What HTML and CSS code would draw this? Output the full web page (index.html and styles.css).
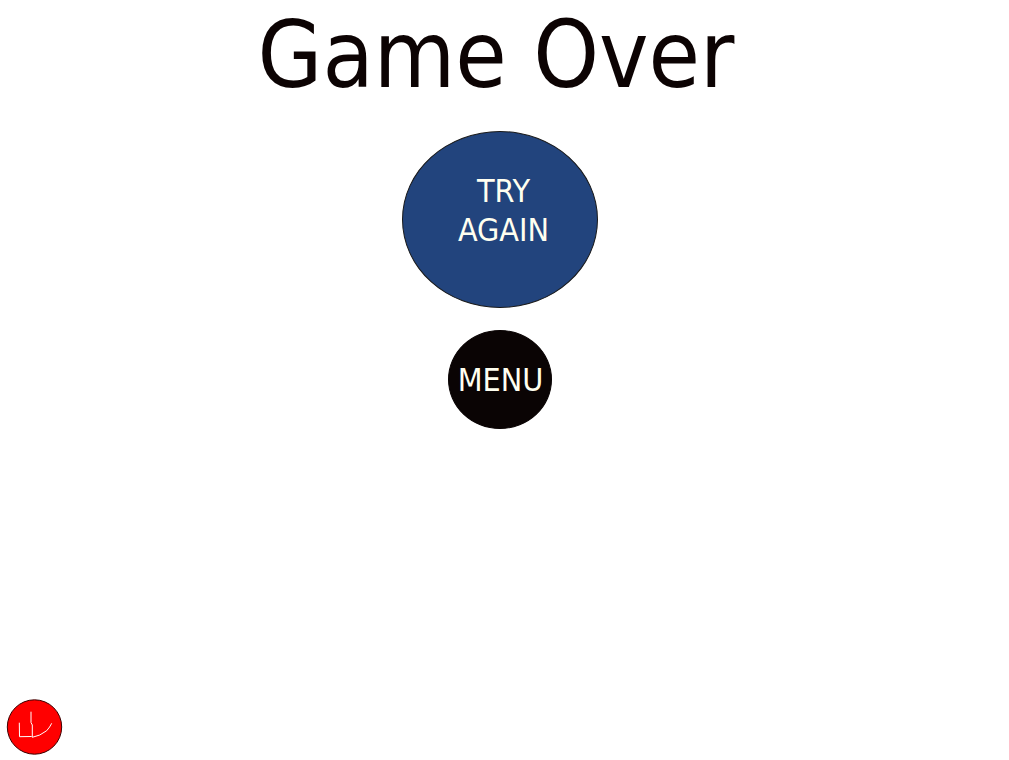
FILE: index.html
```html
<!DOCTYPE html>
<html>
<head>
<meta charset="utf-8">
<link rel="stylesheet" href="styles.css">
</head>
<body>
<main class="screen">
  <h1 class="title">Game Over</h1>
  <button class="btn btn-try">TRY<br>AGAIN</button>
  <button class="btn btn-menu">MENU</button>
</main>
<div class="logo">
  <svg width="58" height="58" viewBox="0 0 58 58">
    <circle cx="28.5" cy="28" r="27.2" fill="#ff0000" stroke="#3a0000" stroke-width="1"/>
    <path d="M13.3 23.7 L13.5 37.7 L25.7 37.5" fill="none" stroke="#fff" stroke-width="1"/>
    <path d="M25 12.7 L25 23.5 L26.3 26 L26.3 38.3 Q34 37 40.7 31.7 Q44 28 45.7 24.3" fill="none" stroke="#fff" stroke-width="1"/>
  </svg>
</div>
</body>
</html>
```

FILE: styles.css
```css
html, body {
  margin: 0;
  padding: 0;
  background: #ffffff;
}
body {
  width: 1009px;
  height: 760px;
  overflow: hidden;
  font-family: "DejaVu Sans Condensed", "DejaVu Sans", sans-serif;
}
.screen {
  width: 999px;
  display: flex;
  flex-direction: column;
  align-items: center;
}
.title {
  margin: 0;
  font-weight: 400;
  font-size: 93px;
  line-height: 110px;
  color: #0c0303;
  padding-right: 7px;
}
.btn {
  border: 1px solid #1a1a1a;
  border-radius: 50%;
  font-family: "DejaVu Sans Condensed", "DejaVu Sans", sans-serif;
  font-weight: 400;
  color: #fffff0;
  padding: 0;
  display: flex;
  align-items: center;
  justify-content: center;
  text-align: center;
}
.btn-try {
  margin-top: 21px;
  width: 196px;
  height: 177px;
  background: #22447d;
  font-size: 32px;
  line-height: 39px;
  padding-left: 8px;
  padding-bottom: 18px;
}
.btn-menu {
  margin-top: 22px;
  width: 104px;
  height: 99px;
  background: #0a0404;
  border-color: #0a0404;
  font-size: 32px;
  padding-left: 2px;
}
.logo {
  position: fixed;
  left: 6px;
  top: 699px;
  width: 58px;
  height: 58px;
}
.logo svg {
  display: block;
}
```
